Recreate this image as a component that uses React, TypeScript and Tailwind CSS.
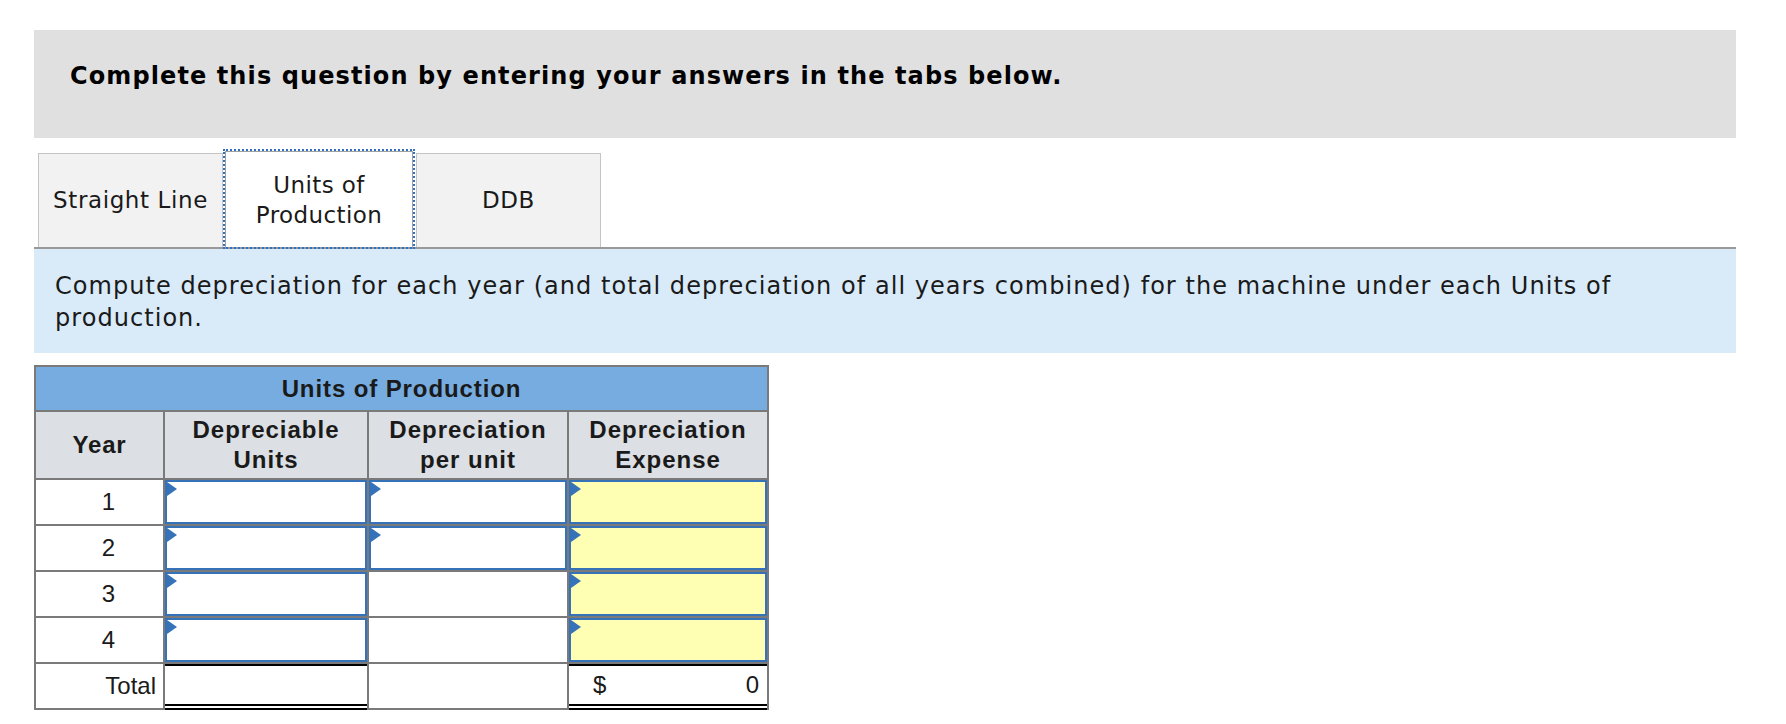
import { useState } from 'react';

const verdana = { fontFamily: '"DejaVu Sans", Verdana, sans-serif' };
const arial = { fontFamily: '"Liberation Sans", Arial, sans-serif' };

type Cell = 'entry' | 'yellow' | 'blank';

const rows: { year: string; cells: Cell[] }[] = [
    { year: '1', cells: ['entry', 'entry', 'yellow'] },
    { year: '2', cells: ['entry', 'entry', 'yellow'] },
    { year: '3', cells: ['entry', 'blank', 'yellow'] },
    { year: '4', cells: ['entry', 'blank', 'yellow'] },
];

function Entry({ yellow }: { yellow?: boolean }) {
    const [value, setValue] = useState('');
    return (
        <div className={`relative h-[44px] border-2 border-[#3572b8] ${yellow ? 'bg-[#ffffb3]' : 'bg-white'}`}>
            <span className="absolute left-0 top-0 h-0 w-0 border-y-[7px] border-l-[10px] border-y-transparent border-l-[#3572b8]" />
            <input
                value={value}
                onChange={(e) => setValue(e.target.value)}
                className="h-full w-full bg-transparent px-3 text-right text-[24px] outline-none"
                style={arial}
            />
        </div>
    );
}

export default function App() {
    const [tab, setTab] = useState(1);
    const tabs = ['Straight Line', 'Units of Production', 'DDB'];

    return (
        <div className="min-h-screen bg-white pl-[34px] pt-[30px] text-[#1a1a1a]">
            <div className="w-[1702px]">
                <div className="h-[108px] bg-[#e0e0e0] pl-[36px] pt-[33px]">
                    <h1 className="text-[24px] font-bold leading-[26px] tracking-[1.1px] text-black" style={verdana}>
                        Complete this question by entering your answers in the tabs below.
                    </h1>
                </div>

                <div className="mt-[13px] flex items-end pl-[4px]">
                    {tabs.map((label, i) =>
                        i === tab ? (
                            <button
                                key={label}
                                onClick={() => setTab(i)}
                                className="relative z-10 mx-[2px] h-[96px] w-[188px] border border-b-0 border-[#a0a0a0] bg-white text-[23px] leading-[30px] tracking-[0.4px] outline-2 outline-dotted outline-[#2f6fc4]"
                                style={verdana}
                            >
                                Units of
                                <br />
                                Production
                            </button>
                        ) : (
                            <button
                                key={label}
                                onClick={() => setTab(i)}
                                className={`h-[94px] w-[185px] border border-b-0 border-[#c4c4c4] bg-[#f2f2f2] text-[23px] tracking-[0.6px] ${i === 2 ? 'ml-[1px]' : ''}`}
                                style={verdana}
                            >
                                {label}
                            </button>
                        ),
                    )}
                </div>

                <div className="border-t-2 border-[#999999] bg-[#d9eaf8] pb-[19px] pl-[21px] pt-[21px]">
                    <p className="max-w-[1600px] text-[24px] leading-[32px] tracking-[1.05px]" style={verdana}>
                        Compute depreciation for each year (and total depreciation of all years combined) for the machine
                        under each Units of production.
                    </p>
                </div>

                <div
                    className="mt-[12px] grid w-[735px] grid-cols-[127px_202px_198px_198px] gap-[2px] bg-[#7a7a7a] p-[2px] pb-0 text-[24px] text-[#1a1a1a]"
                    style={arial}
                >
                    <div className="col-span-4 flex h-[43px] items-center justify-center bg-[#77ace1] font-bold tracking-[0.9px]">
                        Units of Production
                    </div>

                    <div className="flex h-[66px] items-center justify-center bg-[#dcdfe3] font-bold tracking-[0.8px]">Year</div>
                    {[['Depreciable', 'Units'], ['Depreciation', 'per unit'], ['Depreciation', 'Expense']].map(([a, b], i) => (
                        <div key={i} className="flex h-[66px] flex-col items-center justify-center bg-[#dcdfe3] font-bold leading-[30px] tracking-[1px]">
                            <span>{a}</span>
                            <span>{b}</span>
                        </div>
                    ))}

                    {rows.map((row) => (
                        <div key={row.year} className="contents">
                            <div className="flex h-[44px] items-center justify-center bg-white pl-[18px]">{row.year}</div>
                            {row.cells.map((c, j) =>
                                c === 'blank' ? (
                                    <div key={j} className="h-[44px] bg-white" />
                                ) : (
                                    <Entry key={j} yellow={c === 'yellow'} />
                                ),
                            )}
                        </div>
                    ))}

                    <div className="flex h-[46px] items-center justify-end border-b-2 border-[#7a7a7a] bg-white pr-[7px]">Total</div>
                    <div className="h-[46px] border-b-[6px] border-double border-black bg-white">
                        <div className="h-full border-t-2 border-black" />
                    </div>
                    <div className="h-[46px] border-b-2 border-[#7a7a7a] bg-white" />
                    <div className="h-[46px] border-b-[6px] border-double border-black bg-white">
                        <div className="flex h-full items-center justify-between border-t-2 border-black pl-[24px] pr-[8px]">
                            <span>$</span>
                            <span>0</span>
                        </div>
                    </div>
                </div>
            </div>
        </div>
    );
}
